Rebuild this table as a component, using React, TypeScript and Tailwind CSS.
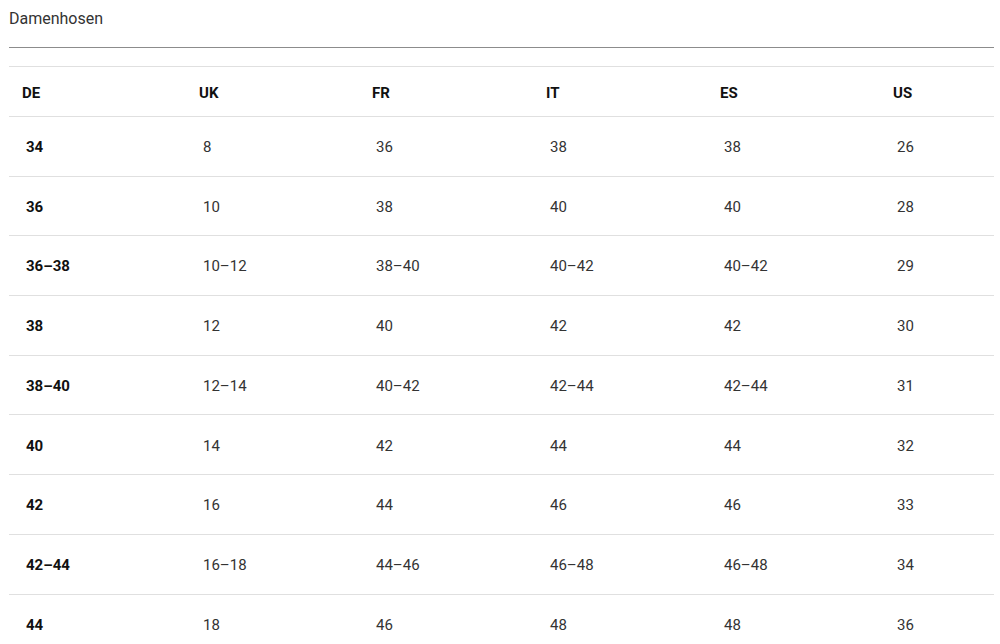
import React from "react";

const head = ["DE", "UK", "FR", "IT", "ES", "US"];
const rows = [
  ["34", "8", "36", "38", "38", "26"],
  ["36", "10", "38", "40", "40", "28"],
  ["36–38", "10–12", "38–40", "40–42", "40–42", "29"],
  ["38", "12", "40", "42", "42", "30"],
  ["38–40", "12–14", "40–42", "42–44", "42–44", "31"],
  ["40", "14", "42", "44", "44", "32"],
  ["42", "16", "44", "46", "46", "33"],
  ["42–44", "16–18", "44–46", "46–48", "46–48", "34"],
  ["44", "18", "46", "48", "48", "36"],
];

const cols = "grid grid-cols-[177px_173px_174px_174px_173px_114px]";

export default function App() {
  return (
    <div className="w-[1000px] h-[644px] overflow-hidden bg-white text-[#2a2a2a] font-['Roboto',sans-serif]">
      <div className="pl-[9px] pr-[6px]">
        <div className="h-[47px] pt-[9px] text-[16px] leading-[20px] text-[#333]">Damenhosen</div>
        <div className="h-[1px] bg-[#8c8c8c]" />
        <div className="h-[18px]" />
        <div className="border-t border-[#e0e0e0]">
          <div className={`${cols} h-[50px] items-center pt-[3px] border-b border-[#e0e0e0]`}>
            {head.map((h) => (
              <div key={h} className="pl-[13px] text-[15px] font-bold text-[#111]">
                {h}
              </div>
            ))}
          </div>
          {rows.map((r, i) => (
            <div key={i} className={`${cols} h-[59.7px] items-center pt-[2px] border-b border-[#e0e0e0]`}>
              {r.map((c, j) => (
                <div
                  key={j}
                  className={`pl-[17px] text-[15px] ${j === 0 ? "font-bold text-[#111]" : "text-[#333]"}`}
                >
                  {c}
                </div>
              ))}
            </div>
          ))}
        </div>
      </div>
    </div>
  );
}
